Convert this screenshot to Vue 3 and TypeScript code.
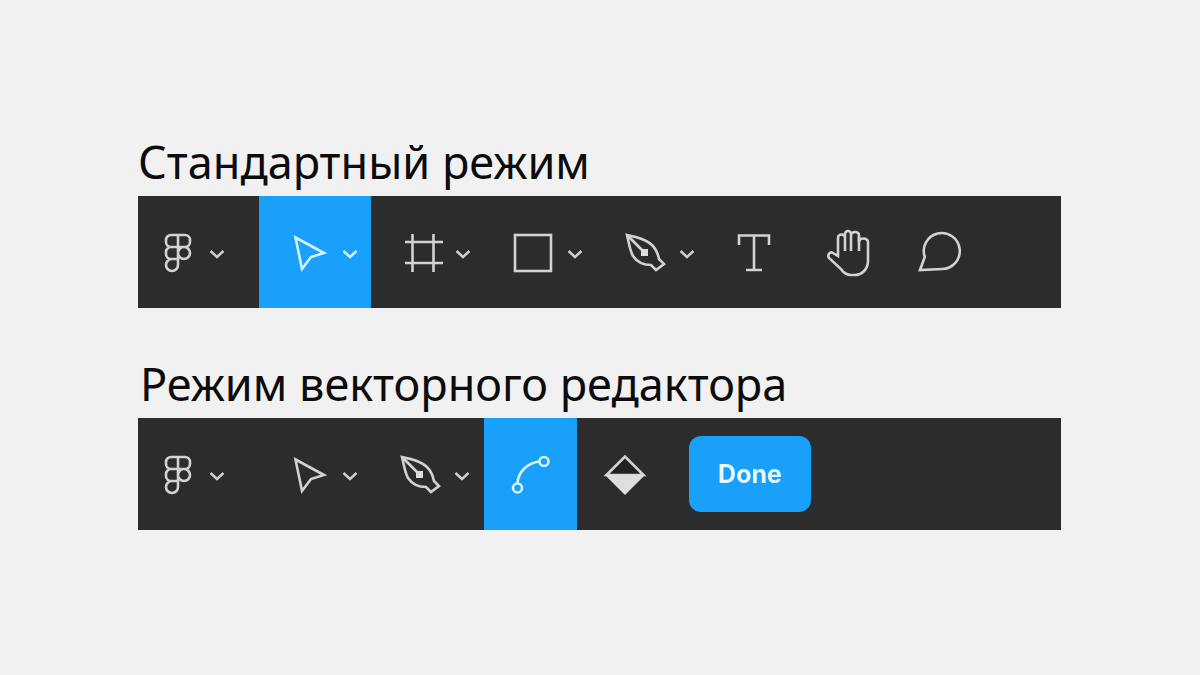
<script setup lang="ts">
const logoPath = 'M13 1H6a5 5 0 0 0-5 5v2a5 5 0 0 0 5 5h7zM13 1h7a5 5 0 0 1 5 5v2a5 5 0 0 1-5 5h-7zM13 13H6a5 5 0 0 0-5 5v2a5 5 0 0 0 5 5h7zM19 13a6 6 0 1 1 0 12 6 6 0 0 1 0-12zM13 25H7a6 6 0 1 0 6 6z'
const pointerPath = 'M1.500 1.500 30 17 17 21 8 33z'
const penPath = 'M1 1C10 3 20 5 26 11 30 15 32 20 33 25L38 30 30 36 25 31C18 31 11 28 7 22 4 17 3 9 1 1Z'
const chevPath = 'M1.500 2 8 8l6.500-6'
</script>

<template>
  <main class="page">
    <h2 class="title first">Стандартный режим</h2>
    <section class="bar">
      <div class="tool logo">
        <svg class="icon" width="26" height="38" viewBox="0 0 26 38"><path :d="logoPath" /></svg>
        <svg class="chev" width="16" height="10" viewBox="0 0 16 10"><path :d="chevPath" /></svg>
      </div>
      <div class="tool active pointer">
        <svg class="icon" width="32" height="35" viewBox="0 0 32 35"><path :d="pointerPath" /></svg>
        <svg class="chev" width="16" height="10" viewBox="0 0 16 10"><path :d="chevPath" /></svg>
      </div>
      <div class="tool frame">
        <svg class="icon" width="38" height="38" viewBox="0 0 38 38">
          <path d="M0 8h38M0 29h38M7.500 0v38M28.500 0v38" />
        </svg>
        <svg class="chev" width="16" height="10" viewBox="0 0 16 10"><path :d="chevPath" /></svg>
      </div>
      <div class="tool rect">
        <svg class="icon" width="38" height="38" viewBox="0 0 38 38">
          <rect x="1" y="1" width="36" height="36" />
        </svg>
        <svg class="chev" width="16" height="10" viewBox="0 0 16 10"><path :d="chevPath" /></svg>
      </div>
      <div class="tool pen">
        <svg class="icon" width="40" height="38" viewBox="0 0 40 38">
          <path :d="penPath" />
          <path d="M1 1 17 17" />
          <rect class="solid" x="15" y="15" width="7" height="7" />
        </svg>
        <svg class="chev" width="16" height="10" viewBox="0 0 16 10"><path :d="chevPath" /></svg>
      </div>
      <div class="tool text">
        <svg class="icon" width="32" height="38" viewBox="0 0 32 38">
          <path d="M1 11V1.500h30V11M16 1.500V36M8 36h16" />
        </svg>
      </div>
      <div class="tool hand">
        <svg class="icon" width="42" height="46" viewBox="0 0 42 46">
          <path d="M11 26V8a3.500 3.500 0 0 1 7 0V4a3 3 0 0 1 6 0v1a4 3 0 0 1 8 0v7a4.500 3.500 0 0 1 9 0v19c0 8-6 14-13 14h-4c-5 0-8-3-10-6L2 28c-2-3 1-7 4-5z" />
          <path d="M18 8v13M24 5v16M32 7v14" />
        </svg>
      </div>
      <div class="tool comment">
        <svg class="icon" width="43" height="40" viewBox="0 0 43 40">
          <path d="M1 37 5.800 24A18 18 0 1 1 23 36Z" />
        </svg>
      </div>
    </section>

    <h2 class="title second">Режим векторного редактора</h2>
    <section class="bar">
      <div class="tool logo">
        <svg class="icon" width="26" height="38" viewBox="0 0 26 38"><path :d="logoPath" /></svg>
        <svg class="chev" width="16" height="10" viewBox="0 0 16 10"><path :d="chevPath" /></svg>
      </div>
      <div class="tool pointer">
        <svg class="icon" width="32" height="35" viewBox="0 0 32 35"><path :d="pointerPath" /></svg>
        <svg class="chev" width="16" height="10" viewBox="0 0 16 10"><path :d="chevPath" /></svg>
      </div>
      <div class="tool pen2">
        <svg class="icon" width="40" height="38" viewBox="0 0 40 38">
          <path :d="penPath" />
          <path d="M1 1 17 17" />
          <rect class="solid" x="15" y="15" width="7" height="7" />
        </svg>
        <svg class="chev" width="16" height="10" viewBox="0 0 16 10"><path :d="chevPath" /></svg>
      </div>
      <div class="tool active bend">
        <svg class="icon" width="38" height="38" viewBox="0 0 38 38">
          <circle cx="5.500" cy="32" r="4.500" />
          <circle cx="32" cy="5.500" r="4.500" />
          <path d="M5.500 27.500C6 16 15 7 27.500 5.500" />
        </svg>
      </div>
      <div class="tool fill">
        <svg class="icon" width="40" height="40" viewBox="0 0 40 40">
          <path class="hollow" d="M1.500 20 20 1.500 38.500 20z" />
          <path class="solid" d="M0 20h40L20 40z" />
        </svg>
      </div>
      <button class="done"><span class="done-label">Done</span></button>
    </section>
  </main>
</template>

<style scoped>
.page {
  width: 1200px;
  height: 675px;
  box-sizing: border-box;
  padding-top: 130px;
  padding-left: 138px;
  background: #f1f1f1;
  font-family: "Noto Sans", "Open Sans", sans-serif;
  overflow: hidden;
}
.title {
  margin: 0;
  height: 66px;
  font-size: 45px;
  line-height: 63px;
  font-weight: 400;
  color: #0c0c0c;
  white-space: nowrap;
}
.second {
  margin-top: 44px;
  padding-left: 2px;
}
.bar {
  display: flex;
  width: 923px;
  height: 112px;
  background: #2c2c2c;
}
.tool {
  display: flex;
  align-items: center;
  flex: none;
  box-sizing: border-box;
  height: 100%;
  padding-top: 2px;
}
.active { background: #18a0fb; }
.icon { flex: none; display: block; overflow: visible; filter: blur(0.5px); }
.icon path, .icon rect, .icon circle {
  fill: none;
  stroke: #d2d2d2;
  stroke-width: 2.6;
}
.icon .solid { fill: #dedede; stroke: none; }
.icon .hollow { fill: #222222; }
.chev { flex: none; display: block; margin-top: 1px; filter: blur(0.5px); }
.chev path { fill: none; stroke: #cfcfcf; stroke-width: 2.4; }
.active .icon path, .active .icon circle { stroke: #d8f1ff; }
.active .chev path { stroke: #d8f1ff; }
.logo { width: 121px; padding-left: 27px; gap: 18px; }
.pointer { width: 112px; padding-left: 35px; gap: 16px; }
.frame { width: 112px; padding-left: 34px; gap: 12px; }
.rect { width: 112px; padding-left: 31px; gap: 15px; }
.pen { width: 112px; padding-left: 31px; gap: 13px; }
.text { width: 120px; padding-left: 31px; }
.hand { width: 92px; }
.comment { width: 60px; }
.pen2 { width: 113px; padding-left: 30px; gap: 13px; }
.bend { width: 93px; padding-left: 28px; }
.fill { width: 112px; padding-left: 28px; }
.done {
  flex: none;
  align-self: center;
  width: 122px;
  height: 76px;
  border: 0;
  border-radius: 12px;
  background: #18a0fb;
  color: #e8f6ff;
  font-family: Inter, "Liberation Sans", sans-serif;
  font-size: 25px;
  font-weight: 700;
  padding: 0;
}
.done-label { display: block; filter: blur(0.5px); }
</style>
